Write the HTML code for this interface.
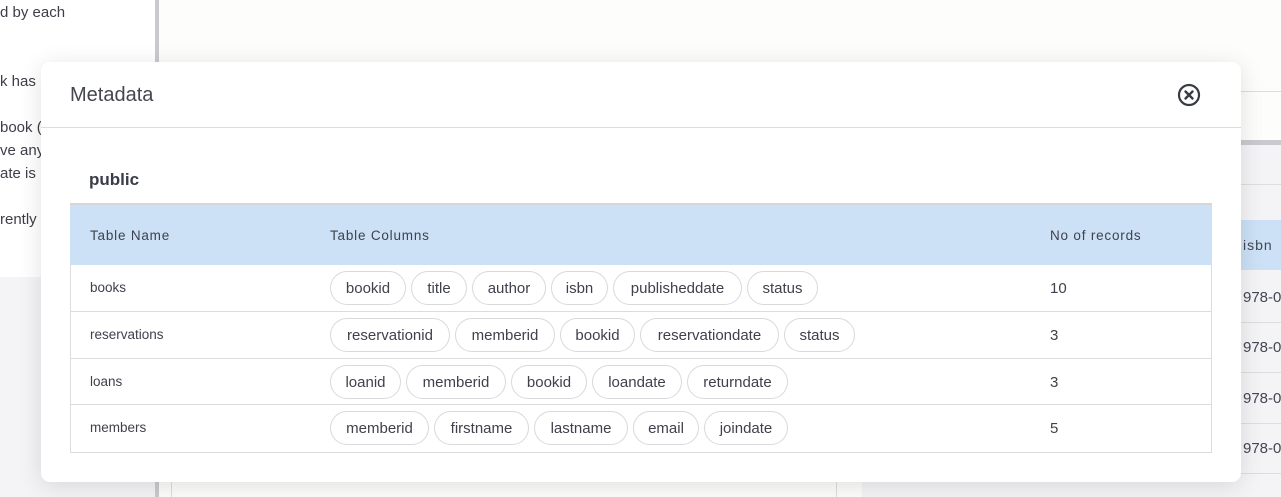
<!DOCTYPE html>
<html><head><meta charset="utf-8"><style>
*{box-sizing:border-box;margin:0;padding:0}
body{width:1281px;height:497px;overflow:hidden;position:relative;background:#fdfdfb;font-family:"Liberation Sans",sans-serif;color:#444654}
.abs{position:absolute;white-space:nowrap}
.lt{font-size:15px;color:#3c3e4a;left:0;white-space:nowrap}
.modal{left:41px;top:62px;width:1200px;height:420px;background:#fff;border-radius:9px;box-shadow:0 4px 24px rgba(0,0,0,.12)}
.chips{position:absolute;left:289px;display:flex;gap:0}
.chip{height:34px;border:1px solid #d9d9dc;border-radius:17px;font-size:15px;display:flex;align-items:center;justify-content:center;margin-right:5px;color:#3f414d}
.row{position:absolute;left:29px;width:1142px;border-top:1px solid #dcdcdc}
.cell{position:absolute;font-size:13.5px;color:#3f414d}
</style></head><body>
<div class="abs" style="left:0;top:0;width:155px;height:277px;background:#fff"></div>
<div class="abs" style="left:0;top:277px;width:155px;height:220px;background:#f4f4f6"></div>
<div class="abs" style="left:155px;top:0;width:4px;height:497px;background:#cacace"></div>
<div class="abs" style="left:171px;top:482px;width:1px;height:15px;background:#ddd"></div>
<div class="abs" style="left:836px;top:482px;width:1px;height:15px;background:#ddd"></div>
<div class="abs" style="left:862px;top:140px;width:419px;height:357px;background:#f4f4f6"></div>
<div class="abs" style="left:1241px;top:91px;width:40px;height:1px;background:#ddd"></div>
<div class="abs" style="left:1241px;top:140px;width:40px;height:5px;background:#cacace"></div>
<div class="abs" style="left:1241px;top:184px;width:40px;height:1px;background:#ddd"></div>
<div class="abs" style="left:1241px;top:220px;width:40px;height:50px;background:#cce1f6"></div>
<div class="abs" style="left:1243px;top:237px;font-size:14px;letter-spacing:1px">isbn</div>
<div class="abs" style="left:1241px;top:322px;width:40px;height:1px;background:#ddd"></div>
<div class="abs" style="left:1241px;top:372px;width:40px;height:1px;background:#ddd"></div>
<div class="abs" style="left:1241px;top:423px;width:40px;height:1px;background:#ddd"></div>
<div class="abs" style="left:1241px;top:473px;width:40px;height:1px;background:#ddd"></div>
<div class="abs" style="left:1243px;top:289px;font-size:15px">978-0</div>
<div class="abs" style="left:1243px;top:339px;font-size:15px">978-0</div>
<div class="abs" style="left:1243px;top:390px;font-size:15px">978-0</div>
<div class="abs" style="left:1243px;top:440px;font-size:15px">978-0</div>
<div class="abs lt" style="top:4px">d by each</div>
<div class="abs lt" style="top:73px">k has</div>
<div class="abs lt" style="top:119px">book (</div>
<div class="abs lt" style="top:142px">ve any</div>
<div class="abs lt" style="top:165px">ate is</div>
<div class="abs lt" style="top:211px">rently</div>

<div class="abs modal">
  <div class="abs" style="left:29px;top:22px;font-size:20px;color:#45474f">Metadata</div>
  <svg class="abs" style="left:1136px;top:21px" width="24" height="24" viewBox="0 0 24 24"><circle cx="12" cy="12" r="10" fill="none" stroke="#383a44" stroke-width="2.2"/><path d="M8.5 8.5L15.5 15.5M15.5 8.5L8.5 15.5" stroke="#383a44" stroke-width="2.4" stroke-linecap="round"/></svg>
  <div class="abs" style="left:0;top:65px;width:1200px;height:1px;background:#dcdcdc"></div>
  <div class="abs" style="left:48px;top:108px;font-size:17px;font-weight:bold;color:#3a3c47">public</div>
  <div class="abs" style="left:29px;top:141px;width:1142px;height:250px;border:1px solid #dcdcdc;border-top:2px solid #d6d6d6"></div>
  <div class="abs" style="left:29px;top:141px;width:1142px;height:62px;background:#cce1f6;border-top:2px solid #d6d6d6"></div>
  <div class="cell" style="left:49px;top:166px;letter-spacing:.8px">Table Name</div>
  <div class="cell" style="left:289px;top:166px;letter-spacing:.8px">Table Columns</div>
  <div class="cell" style="left:1009px;top:166px;letter-spacing:.8px">No of records</div>

  <div class="row" style="top:249px"></div>
  <div class="row" style="top:296px"></div>
  <div class="row" style="top:342px"></div>

  <div class="cell" style="left:49px;top:218px">books</div>
  <div class="cell" style="left:49px;top:265px">reservations</div>
  <div class="cell" style="left:49px;top:312px">loans</div>
  <div class="cell" style="left:49px;top:358px">members</div>
  <div class="cell" style="left:1009px;top:218px;font-size:15px">10</div>
  <div class="cell" style="left:1009px;top:265px;font-size:15px">3</div>
  <div class="cell" style="left:1009px;top:312px;font-size:15px">3</div>
  <div class="cell" style="left:1009px;top:358px;font-size:15px">5</div>

  <div class="chips" style="top:209px">
    <div class="chip" style="width:76px">bookid</div><div class="chip" style="width:56px">title</div><div class="chip" style="width:74px">author</div><div class="chip" style="width:57px">isbn</div><div class="chip" style="width:129px">publisheddate</div><div class="chip" style="width:71px">status</div>
  </div>
  <div class="chips" style="top:256px">
    <div class="chip" style="width:120px">reservationid</div><div class="chip" style="width:100px">memberid</div><div class="chip" style="width:75px">bookid</div><div class="chip" style="width:139px">reservationdate</div><div class="chip" style="width:71px">status</div>
  </div>
  <div class="chips" style="top:303px">
    <div class="chip" style="width:71px">loanid</div><div class="chip" style="width:100px">memberid</div><div class="chip" style="width:76px">bookid</div><div class="chip" style="width:90px">loandate</div><div class="chip" style="width:101px">returndate</div>
  </div>
  <div class="chips" style="top:349px">
    <div class="chip" style="width:99px">memberid</div><div class="chip" style="width:95px">firstname</div><div class="chip" style="width:94px">lastname</div><div class="chip" style="width:66px">email</div><div class="chip" style="width:84px">joindate</div>
  </div>
</div>
</body></html>
